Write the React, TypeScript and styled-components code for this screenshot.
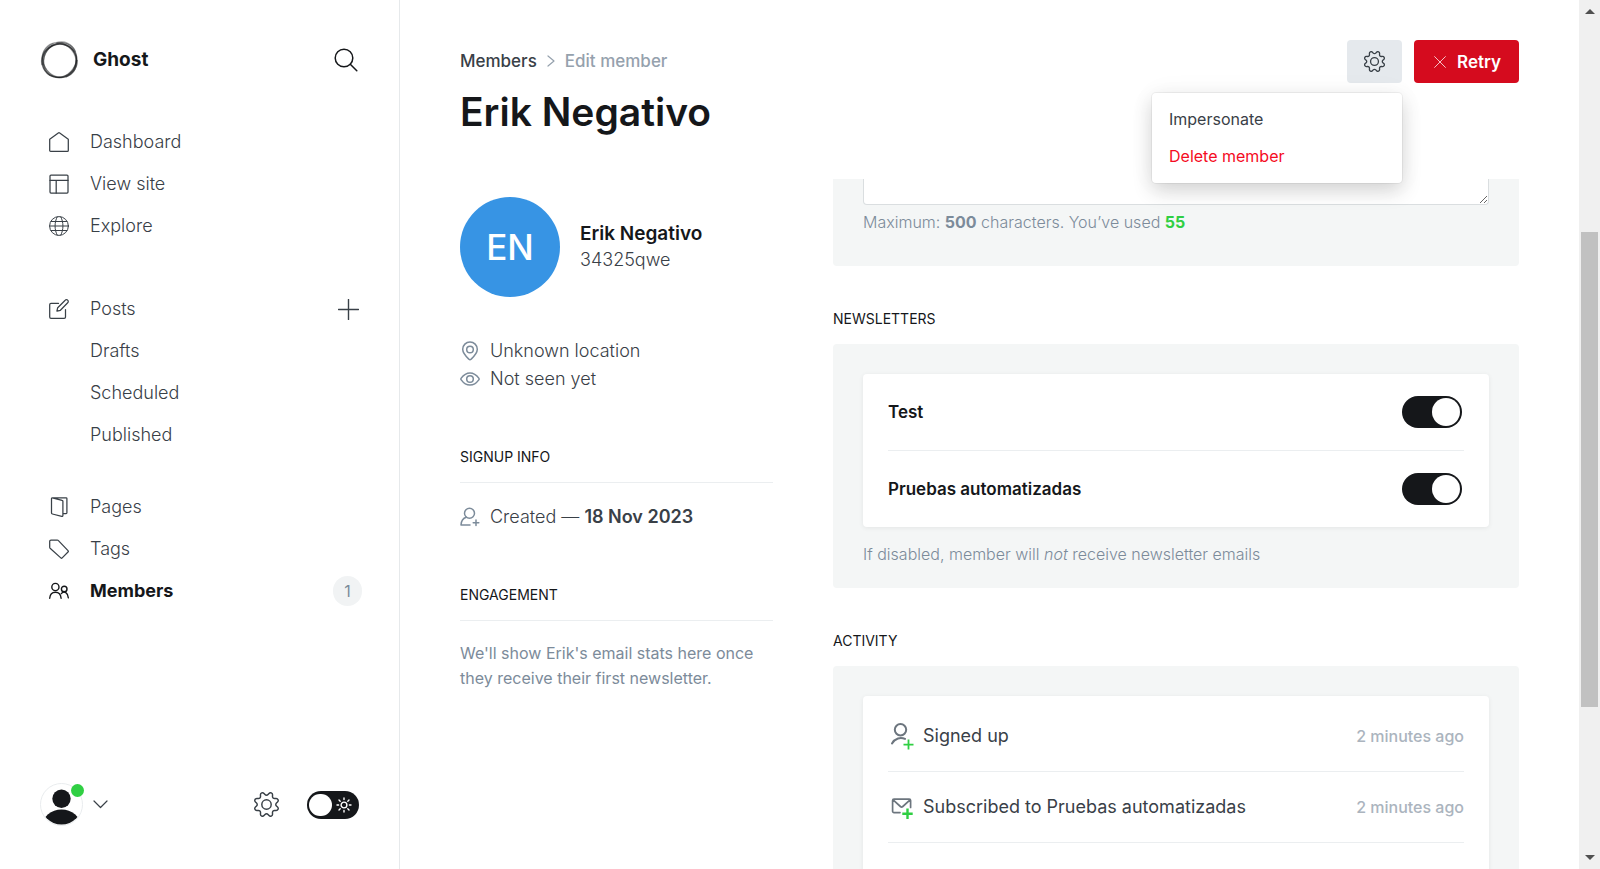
import React from "react";
import styled, { createGlobalStyle } from "styled-components";

const color = {
  black: "#15171a",
  dark: "#394047",
  mid: "#7c8b9a",
  light: "#abb4be",
  line: "#ebeef0",
  panel: "#f4f6f6",
  green: "#30cf43",
  red: "#f50b23",
};

const GlobalStyle = createGlobalStyle`
  *, *::before, *::after { box-sizing: border-box; }
  body {
    margin: 0;
    background: #fff;
    color: ${color.dark};
    font-family: Inter, "Liberation Sans", sans-serif;
    font-size: 18px;
    line-height: 24px;
    overflow: hidden;
  }
  button { font: inherit; color: inherit; border: 0; padding: 0; background: none; cursor: pointer; }
  a { color: inherit; text-decoration: none; }
  h1, h2, h3, h4, p, ul { margin: 0; padding: 0; font-weight: inherit; list-style: none; }
`;

/* ---------- shell ---------- */

const Shell = styled.div`
  display: flex;
  height: 100vh;
`;

const Sidebar = styled.nav`
  flex: none;
  display: flex;
  flex-direction: column;
  width: 400px;
  padding: 39px 40px 43px;
  border-right: 1px solid #e6e9eb;
`;

const Brand = styled.header`
  display: flex;
  align-items: center;
  gap: 12px;
  height: 42px;
  margin-bottom: 40px;
  color: ${color.black};
`;

const BrandName = styled.span`
  flex: 1;
  font-size: 19px;
  font-weight: 700;
`;

const IconButton = styled.button`
  display: flex;
  align-items: center;
  justify-content: center;
`;

const SearchButton = styled(IconButton)`
  margin-right: 1px;
  color: ${color.black};
`;

const NavGroup = styled.ul<{ $gap: number }>`
  margin-bottom: ${(p) => p.$gap}px;
`;

const NavItem = styled.li`
  display: flex;
  align-items: center;
  height: 42px;
`;

const NavLink = styled.a<{ $active?: boolean }>`
  flex: 1;
  display: grid;
  grid-template-columns: 20px 1fr;
  column-gap: 21px;
  align-items: center;
  padding-left: 9px;
  color: ${(p) => (p.$active ? color.black : color.dark)};
  font-weight: ${(p) => (p.$active ? 700 : 300)};
`;

const NavText = styled.span`
  grid-column: 2;
`;

const CountBadge = styled.span`
  display: flex;
  align-items: center;
  justify-content: center;
  width: 29px;
  height: 30px;
  margin-right: -3px;
  border-radius: 15px;
  background: #f1f3f4;
  color: ${color.mid};
  font-size: 16px;
`;

const SidebarFooter = styled.footer`
  display: flex;
  align-items: center;
  height: 43px;
  margin-top: auto;
`;

const UserButton = styled(IconButton)`
  position: relative;
  gap: 10px;
  margin-right: auto;
`;

const NewsDot = styled.span`
  position: absolute;
  top: 1px;
  left: 31px;
  width: 13px;
  height: 13px;
  border-radius: 50%;
  background: ${color.green};
`;

const ThemeLabel = styled.label`
  position: relative;
  display: flex;
  margin-left: 28px;
  svg {
    position: absolute;
    top: 6px;
    right: 7px;
    color: #fff;
    pointer-events: none;
  }
`;

const ThemeSwitch = styled.input`
  appearance: none;
  width: 52px;
  height: 28px;
  margin: 0;
  border-radius: 14px;
  background: ${color.black};
  &::before {
    content: "";
    display: block;
    width: 23px;
    height: 22px;
    margin: 3px 2px;
    border-radius: 11px;
    background: #fff;
  }
`;

/* ---------- main ---------- */

const Main = styled.main`
  flex: 1;
  min-width: 0;
  display: flex;
  flex-direction: column;
`;

const PageHeader = styled.header`
  flex: none;
  display: flex;
  justify-content: space-between;
  align-items: flex-start;
  height: 179px;
  padding: 40px 60px 0;
`;

const Breadcrumb = styled.div`
  display: flex;
  align-items: center;
  gap: 10px;
  height: 42px;
  font-size: 17px;
  font-weight: 500;
  color: #95a1ad;
  a { color: ${color.dark}; }
`;

const PageTitle = styled.h1`
  margin-top: 6px;
  color: ${color.black};
  font-size: 39px;
  font-weight: 600;
  line-height: 48px;
`;

const Actions = styled.div`
  position: relative;
  display: flex;
  gap: 12px;
`;

const GearButton = styled(IconButton)`
  width: 55px;
  height: 43px;
  border-radius: 4px;
  background: #e5e9ed;
`;

const RetryButton = styled(IconButton)`
  gap: 11px;
  height: 43px;
  padding: 0 18px 0 20px;
  border-radius: 4px;
  background: #d50b1e;
  color: #fff;
  font-size: 17px;
  font-weight: 600;
  svg { opacity: 0.75; }
`;

const Dropdown = styled.ul`
  position: absolute;
  z-index: 2;
  top: 53px;
  right: 117px;
  width: 250px;
  padding: 7px 0 9px;
  border-radius: 4px;
  background: #fff;
  box-shadow: 0 0 0 1px rgba(0, 0, 0, 0.05), 0 8px 20px rgba(0, 0, 0, 0.16), 0 0 28px rgba(0, 0, 0, 0.04);
`;

const DropdownItem = styled.button<{ $danger?: boolean }>`
  display: block;
  width: 100%;
  height: 37px;
  padding: 0 17px;
  text-align: left;
  font-size: 16px;
  color: ${(p) => (p.$danger ? color.red : color.dark)};
`;

const Content = styled.div`
  flex: 1;
  min-height: 0;
  overflow: hidden;
  display: grid;
  grid-template-columns: 313px minmax(0, 1fr);
  column-gap: 60px;
  padding: 0 60px;
`;

const Profile = styled.aside`
  padding-top: 18px;
`;

const Identity = styled.div`
  display: flex;
  align-items: center;
  gap: 20px;
  margin-bottom: 40px;
`;

const Avatar = styled.figure`
  display: flex;
  align-items: center;
  justify-content: center;
  width: 100px;
  height: 100px;
  margin: 0;
  border-radius: 50%;
  background: #3794e4;
  color: #fff;
  font-size: 35px;
  font-weight: 500;
`;

const MemberName = styled.h3`
  color: ${color.black};
  font-size: 19px;
  font-weight: 600;
  line-height: 27px;
`;

const MemberMail = styled.p`
  padding-bottom: 2px;
  font-size: 18px;
  font-weight: 300;
  line-height: 26px;
  color: ${color.dark};
`;

const Detail = styled.p`
  display: flex;
  align-items: center;
  gap: 10px;
  height: 28px;
  color: ${color.dark};
  font-weight: 300;
  svg { color: ${color.mid}; }
  strong { font-weight: 600; }
`;

const SideTitle = styled.h4`
  height: 38px;
  margin: 52px 0 20px;
  border-bottom: 1px solid ${color.line};
  color: ${color.black};
  font-size: 14px;
`;

const EmptyNote = styled.p`
  color: ${color.mid};
  font-size: 16px;
  line-height: 25px;
`;

const Sections = styled.div`
  min-width: 0;
`;

const SectionTitle = styled.h4`
  margin: 41px 0 13px;
  color: ${color.black};
  font-size: 14px;
`;

const Panel = styled.section<{ $continued?: boolean }>`
  padding: ${(p) => (p.$continued ? "0 30px 32px" : "30px 30px 22px")};
  border-radius: ${(p) => (p.$continued ? "0 0 4px 4px" : "4px")};
  background: ${color.panel};
`;

const Note = styled.textarea`
  display: block;
  width: 100%;
  height: 26px;
  margin-bottom: 5px;
  border: 1px solid #dadee0;
  border-top: 0;
  border-radius: 0 0 4px 4px;
  background: #fff;
  resize: vertical;
  outline: 0;
`;

const Hint = styled.p`
  color: ${color.mid};
  font-size: 16px;
  font-weight: 300;
  strong { font-weight: 700; }
`;

const Used = styled.strong`
  color: ${color.green};
`;

const Card = styled.ul`
  margin-bottom: 15px;
  padding: 0 25px;
  border-radius: 4px;
  background: #fff;
  box-shadow: 0 1px 5px rgba(0, 0, 0, 0.07);
`;

const NewsletterRow = styled.li`
  height: 76px;
  & + & { height: 77px; border-top: 1px solid ${color.line}; }
`;

const NewsletterLabel = styled.label`
  display: flex;
  align-items: center;
  justify-content: space-between;
  height: 75px;
  padding-right: 2px;
  color: ${color.black};
  font-size: 17px;
  font-weight: 600;
`;

const Switch = styled.input`
  appearance: none;
  width: 60px;
  height: 32px;
  margin: 0;
  padding: 2px;
  border-radius: 16px;
  background: ${color.black};
  &::before {
    content: "";
    display: block;
    width: 28px;
    height: 28px;
    margin-left: auto;
    border-radius: 50%;
    background: #fff;
  }
  &:not(:checked)::before { margin-left: 0; }
`;

const ActivityRow = styled.li`
  display: flex;
  align-items: center;
  gap: 8px;
  height: 71px;
  padding-left: 3px;
  border-bottom: 1px solid ${color.line};
`;

const ActivityCard = styled(Card)`
  padding-top: 5px;
`;

const ActivityText = styled.span`
  flex: 1;
`;

const ActivityTime = styled.time`
  color: ${color.light};
  font-size: 16px;
  font-weight: 500;
`;

/* ---------- scroll bar ---------- */

const ScrollTrack = styled.div`
  flex: none;
  display: flex;
  flex-direction: column;
  align-items: center;
  width: 21px;
  padding: 9px 0;
  background: #f0f0f0;
`;

const ScrollRun = styled.div`
  flex: 1;
  display: grid;
  grid-template-rows: 218fr 475fr 148fr;
  width: 17px;
`;

const ScrollThumb = styled.div`
  grid-row: 2;
  background: #c1c1c1;
`;

const ScrollArrow = styled.span<{ $up?: boolean }>`
  width: 0;
  border: 5px solid transparent;
  border-${(p) => (p.$up ? "bottom" : "top")}-color: #505050;
  border-${(p) => (p.$up ? "top" : "bottom")}-width: 0;
`;

/* ---------- icons ---------- */

type IconProps = { size?: number; box?: number; stroke?: number; height?: number; children: React.ReactNode };

const Icon = ({ size = 20, box = size, stroke = 1.25, height = size, children }: IconProps) => (
  <svg
    width={size}
    height={height}
    viewBox={`0 0 ${box} ${(box * height) / size}`}
    fill="none"
    stroke="currentColor"
    strokeWidth={stroke}
    strokeLinecap="round"
    strokeLinejoin="round"
    aria-hidden="true"
  >
    {children}
  </svg>
);

const HomeIcon = () => (
  <Icon><path d="M.7 7.2 9.3.9a1.2 1.2 0 0 1 1.4 0l8.6 6.3v11.2a.9.9 0 0 1-.9.9H1.6a.9.9 0 0 1-.9-.9Z" /></Icon>
);
const LayoutIcon = () => (
  <Icon><rect x="1" y="1" width="18" height="18" rx="1" /><path d="M1 6.4h18M7.2 6.4V19" /></Icon>
);
const GlobeIcon = () => (
  <Icon stroke={1}>
    <circle cx="10" cy="10" r="9.4" />
    <path d="M.7 10h18.6M2 5.5h16M2 14.5h16M8.2.8C5.3 6.5 5.3 13.5 8.2 19.2M11.8.8c2.9 5.7 2.9 12.7 0 18.4" />
  </Icon>
);
const PostIcon = () => (
  <Icon>
    <path d="M9.500 4.400H2A1.300 1.300 0 0 0 .7 5.700V18A1.300 1.300 0 0 0 2 19.300h13.200a1.300 1.300 0 0 0 1.300-1.300v-7.500" />
    <path d="m11.400 11.300-3.500.9.800-3.500 7.500-7.500a1.700 1.700 0 0 1 2.500 0 1.700 1.700 0 0 1 0 2.500Z" />
  </Icon>
);
const PagesIcon = () => (
  <Icon>
    <path d="m3.300.8 9.800 2.500c.5.100.8.500.8.900v14.300c0 .6-.5 1-1.100.8l-9.400-2.300c-.5-.1-.9-.5-.9-1V1.600c0-.5.3-.8.8-.8h13.800c.5 0 .8.400.8.800v14.200c0 .500-.3.800-.8.800H14" />
  </Icon>
);
const TagIcon = () => (
  <Icon>
    <path d="M2 1h6.300c.3 0 .7.100.9.400l9.800 10.200a1 1 0 0 1 0 1.400l-5.800 5.900a1 1 0 0 1-1.400 0L1.100 9.200A1.300 1.300 0 0 1 .7 8.300V2.300C.7 1.500 1.200 1 2 1Z" />
  </Icon>
);
const MembersIcon = () => (
  <Icon stroke={1.4}>
    <circle cx="6.400" cy="6" r="3.600" />
    <circle cx="15.200" cy="8" r="2.800" />
    <path d="M.7 17.200c.3-3.700 2.600-6 5.700-6s5.400 2.300 5.700 6M12.400 12.400c3-2.800 6.500-.6 6.900 4.400" />
  </Icon>
);
const SearchIcon = () => (
  <Icon size={24} stroke={1.5}><circle cx="10" cy="10" r="8.800" /><path d="m16.300 16.300 6.500 6.500" /></Icon>
);
const PlusIcon = () => (
  <Icon size={21} stroke={1.4}><path d="M10.500.5v20M.5 10.500h20" /></Icon>
);
const GearIcon = ({ size, stroke }: { size: number; stroke: number }) => (
  <Icon size={size} box={24} stroke={stroke}>
    <circle cx="12" cy="12" r="4.500" />
    <path d="M10.546 2.438a1.957 1.957 0 0 0 2.908 0L14.400 1.400a1.959 1.959 0 0 1 3.410 1.413l-.071 1.400A1.958 1.958 0 0 0 19.790 6.266l1.400-.071A1.959 1.959 0 0 1 22.600 9.600l-1.040.942a1.959 1.959 0 0 0 0 2.909l1.040.942a1.959 1.959 0 0 1-1.413 3.410l-1.400-.071a1.958 1.958 0 0 0-2.056 2.056l.071 1.400A1.959 1.959 0 0 1 14.400 22.600l-.941-1.041a1.959 1.959 0 0 0-2.908 0L9.606 22.600A1.959 1.959 0 0 1 6.200 21.192l.072-1.400a1.958 1.958 0 0 0-2.056-2.056l-1.400.071A1.958 1.958 0 0 1 1.400 14.400l1.041-.942a1.957 1.957 0 0 0 0-2.909L1.400 9.606A1.958 1.958 0 0 1 2.808 6.200l1.400.071A1.958 1.958 0 0 0 6.264 4.211L6.192 2.800A1.959 1.959 0 0 1 9.606 1.400Z" />
  </Icon>
);
const ChevronDown = () => (
  <Icon size={15} height={9} stroke={1.2}><path d="m1 1 6.500 6.500L14 1" /></Icon>
);
const ChevronRight = () => (
  <Icon size={8} height={12} stroke={1.2}><path d="m1 1 6 5-6 5" /></Icon>
);
const CloseIcon = () => (
  <Icon size={12} stroke={1}><path d="m.6.6 10.800 10.800M11.400.6.6 11.400" /></Icon>
);
const SunIcon = () => (
  <Icon size={16} stroke={1.4}>
    <circle cx="8" cy="8" r="2.900" />
    <path d="M8 1v1.600M8 13.400V15M1 8h1.600M13.400 8H15M3 3l1.200 1.200M11.800 11.800 13 13M3 13l1.200-1.200M11.800 4.200 13 3" />
  </Icon>
);
const PinIcon = () => (
  <Icon stroke={1.5}>
    <circle cx="10" cy="8.500" r="3.300" />
    <path d="M17.300 8.300c0 4.200-4.400 8.200-6.300 10a1.400 1.400 0 0 1-2 0c-1.900-1.800-6.300-5.800-6.300-10a7.300 7.300 0 0 1 14.600 0Z" />
  </Icon>
);
const EyeIcon = () => (
  <Icon stroke={1.5}>
    <circle cx="10" cy="10" r="3.300" />
    <path d="M10 3.900c-3.600 0-6.900 2.600-8.800 5.200a1.500 1.500 0 0 0 0 1.800c1.900 2.600 5.200 5.200 8.800 5.200s6.900-2.600 8.800-5.200a1.500 1.500 0 0 0 0-1.800C16.900 6.500 13.600 3.900 10 3.900Z" />
  </Icon>
);
const CreatedIcon = () => (
  <Icon stroke={1.5}>
    <circle cx="9.500" cy="6.200" r="5" />
    <path d="M6.300 10.300C2.800 11.300 1.200 13.800 1 18h9M16 13v5.600M13.200 15.800h5.600" />
  </Icon>
);
const SignedUpIcon = () => (
  <Icon size={24} height={28} stroke={2}>
    <g stroke="#6c757e"><circle cx="9.500" cy="7.800" r="5.700" /><path d="M1 21.400c3-5.100 8.500-6.600 13-4.500" /></g>
    <path stroke={color.green} strokeWidth="1.800" d="M17.500 17.600v10M12.500 22.600h10" strokeLinecap="butt" />
  </Icon>
);
const SubscribedIcon = () => (
  <Icon size={24} height={24} stroke={1.7}>
    <path stroke="#6c757e" d="M9 17.600H3A1.400 1.400 0 0 1 1.600 16.200V5.500c0-.8.600-1.400 1.400-1.400h15.200c.8 0 1.400.6 1.400 1.400V12.500M2.400 5.200l7 6.300c.8.700 1.600.7 2.400 0l7-6.300" />
    <path stroke={color.green} strokeWidth="2.400" strokeLinecap="butt" d="M16.500 13.600V24M11.300 18.800h10.400" />
  </Icon>
);
const LogoIcon = () => (
  <svg width="41" height="42" viewBox="0 0 41 42" fill="none" stroke="#15171a" aria-hidden="true">
    <g transform="translate(19.500 21)">
      <ellipse rx="17.300" ry="16.600" cx="-.6" cy=".6" strokeWidth="1.400" opacity=".7" transform="rotate(-25)" />
      <ellipse rx="18" ry="15.800" cx=".3" cy=".3" strokeWidth="1.200" opacity=".5" transform="rotate(-55)" />
      <ellipse rx="18.200" ry="16" cx="0" cy=".2" strokeWidth="1.400" opacity=".4" transform="rotate(50)" />
      <ellipse rx="16.800" ry="16.800" cx="1" cy=".8" strokeWidth="1.200" opacity=".4" />
      <path d="M-3-16.800C4-19.500 12-16 15.500-8" strokeWidth="2.600" opacity=".3" />
      <path d="M17.300 0C17 8 13 14 6 16.500M-17 5C-19-4-14-13-6-16" strokeWidth="2.400" opacity=".35" />
    </g>
  </svg>
);
const UserIcon = () => (
  <svg width="43" height="43" viewBox="0 0 43 43" aria-hidden="true">
    <clipPath id="user-clip"><circle cx="21.500" cy="20.500" r="21" /></clipPath>
    <circle cx="21.500" cy="21.500" r="21" fill="#fff" stroke="#e9ecee" />
    <g clipPath="url(#user-clip)" fill={color.black}>
      <circle cx="21.500" cy="15.700" r="9.200" />
      <ellipse cx="21.500" cy="42.500" rx="19" ry="16" />
    </g>
  </svg>
);

/* ---------- app ---------- */

export default function App() {
  return (
    <>
      <GlobalStyle />
      <Shell>
        <Sidebar>
          <Brand>
            <LogoIcon />
            <BrandName>Ghost</BrandName>
            <SearchButton aria-label="Search"><SearchIcon /></SearchButton>
          </Brand>
          <NavGroup $gap={41}>
            <NavItem><NavLink href="#"><HomeIcon /><NavText>Dashboard</NavText></NavLink></NavItem>
            <NavItem><NavLink href="#"><LayoutIcon /><NavText>View site</NavText></NavLink></NavItem>
            <NavItem><NavLink href="#"><GlobeIcon /><NavText>Explore</NavText></NavLink></NavItem>
          </NavGroup>
          <NavGroup $gap={30}>
            <NavItem>
              <NavLink href="#"><PostIcon /><NavText>Posts</NavText></NavLink>
              <IconButton aria-label="New post"><PlusIcon /></IconButton>
            </NavItem>
            <NavItem><NavLink href="#"><NavText>Drafts</NavText></NavLink></NavItem>
            <NavItem><NavLink href="#"><NavText>Scheduled</NavText></NavLink></NavItem>
            <NavItem><NavLink href="#"><NavText>Published</NavText></NavLink></NavItem>
          </NavGroup>
          <NavGroup $gap={0}>
            <NavItem><NavLink href="#"><PagesIcon /><NavText>Pages</NavText></NavLink></NavItem>
            <NavItem><NavLink href="#"><TagIcon /><NavText>Tags</NavText></NavLink></NavItem>
            <NavItem>
              <NavLink href="#" $active><MembersIcon /><NavText>Members</NavText></NavLink>
              <CountBadge>1</CountBadge>
            </NavItem>
          </NavGroup>
          <SidebarFooter>
            <UserButton aria-label="Account"><UserIcon /><NewsDot /><ChevronDown /></UserButton>
            <IconButton aria-label="Settings"><GearIcon size={25} stroke={1.4} /></IconButton>
            <ThemeLabel aria-label="Night mode">
              <ThemeSwitch type="checkbox" />
              <SunIcon />
            </ThemeLabel>
          </SidebarFooter>
        </Sidebar>

        <Main>
          <PageHeader>
            <div>
              <Breadcrumb>
                <a href="#">Members</a>
                <ChevronRight />
                <span>Edit member</span>
              </Breadcrumb>
              <PageTitle>Erik Negativo</PageTitle>
            </div>
            <Actions>
              <GearButton aria-label="Member actions"><GearIcon size={21} stroke={1.5} /></GearButton>
              <RetryButton><CloseIcon />Retry</RetryButton>
              <Dropdown>
                <li><DropdownItem>Impersonate</DropdownItem></li>
                <li><DropdownItem $danger>Delete member</DropdownItem></li>
              </Dropdown>
            </Actions>
          </PageHeader>

          <Content>
            <Profile>
              <Identity>
                <Avatar>EN</Avatar>
                <div>
                  <MemberName>Erik Negativo</MemberName>
                  <MemberMail>34325qwe</MemberMail>
                </div>
              </Identity>
              <Detail><PinIcon />Unknown location</Detail>
              <Detail><EyeIcon />Not seen yet</Detail>
              <SideTitle>SIGNUP INFO</SideTitle>
              <Detail><CreatedIcon /><span>Created — <strong>18 Nov 2023</strong></span></Detail>
              <SideTitle>ENGAGEMENT</SideTitle>
              <EmptyNote>We'll show Erik's email stats here once they receive their first newsletter.</EmptyNote>
            </Profile>

            <Sections>
              <Panel $continued>
                <Note aria-label="Note" />
                <Hint>Maximum: <strong>500</strong> characters. You’ve used <Used>55</Used></Hint>
              </Panel>

              <SectionTitle>NEWSLETTERS</SectionTitle>
              <Panel>
                <Card>
                  <NewsletterRow>
                    <NewsletterLabel>Test<Switch type="checkbox" defaultChecked /></NewsletterLabel>
                  </NewsletterRow>
                  <NewsletterRow>
                    <NewsletterLabel>Pruebas automatizadas<Switch type="checkbox" defaultChecked /></NewsletterLabel>
                  </NewsletterRow>
                </Card>
                <Hint>If disabled, member will <em>not</em> receive newsletter emails</Hint>
              </Panel>

              <SectionTitle>ACTIVITY</SectionTitle>
              <Panel>
                <ActivityCard>
                  <ActivityRow>
                    <SignedUpIcon />
                    <ActivityText>Signed up</ActivityText>
                    <ActivityTime>2 minutes ago</ActivityTime>
                  </ActivityRow>
                  <ActivityRow>
                    <SubscribedIcon />
                    <ActivityText>Subscribed to Pruebas automatizadas</ActivityText>
                    <ActivityTime>2 minutes ago</ActivityTime>
                  </ActivityRow>
                  <ActivityRow />
                </ActivityCard>
              </Panel>
            </Sections>
          </Content>
        </Main>

        <ScrollTrack aria-hidden="true">
          <ScrollArrow $up />
          <ScrollRun><ScrollThumb /></ScrollRun>
          <ScrollArrow />
        </ScrollTrack>
      </Shell>
    </>
  );
}
